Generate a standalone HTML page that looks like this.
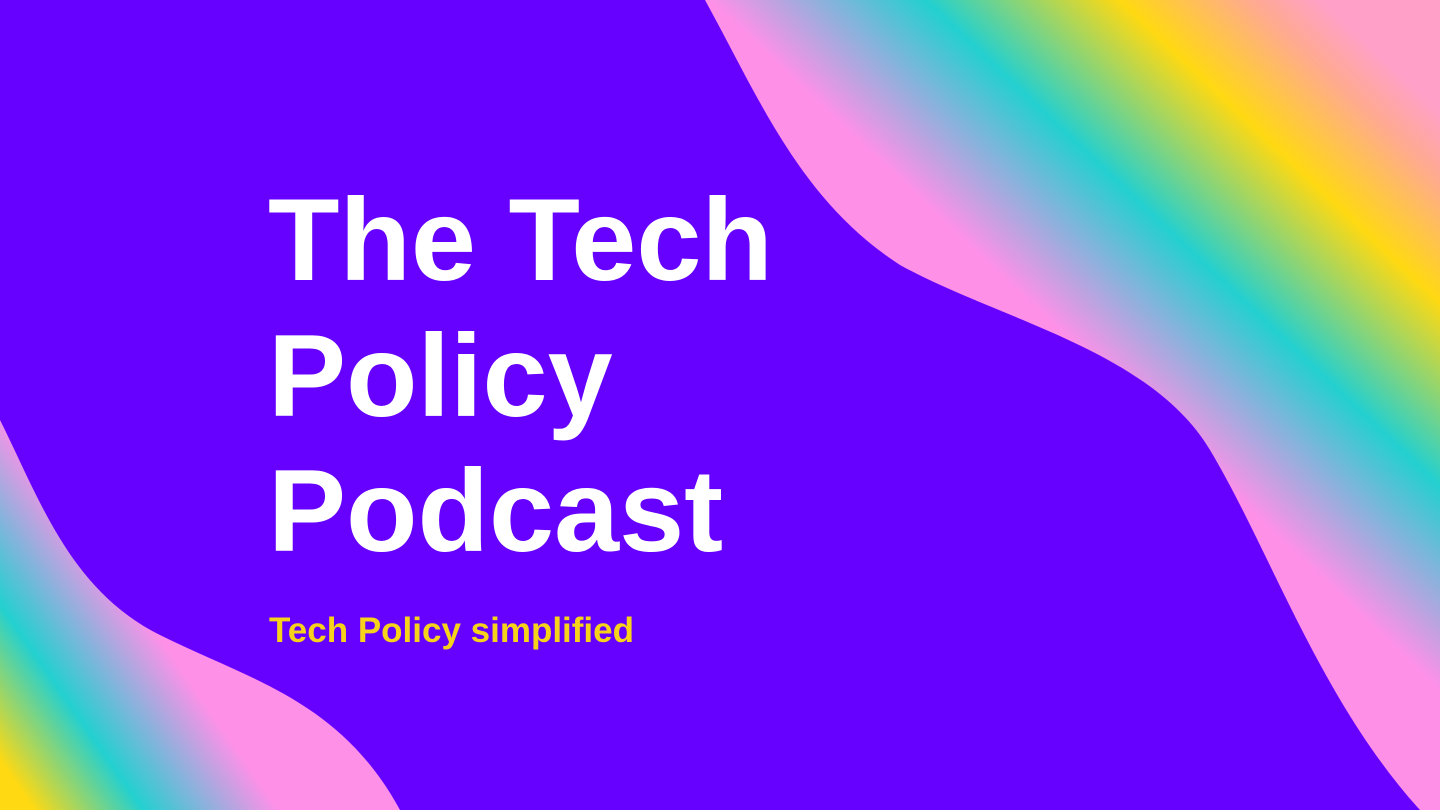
<!DOCTYPE html>
<html><head><meta charset="utf-8"><style>
html,body{margin:0;padding:0;}
body{width:1440px;height:810px;overflow:hidden;background:#6600ff;position:relative;font-family:"Liberation Sans",Arial,sans-serif;}
svg{position:absolute;left:0;top:0;}
.t{position:absolute;left:268px;color:#fff;font-weight:bold;font-size:117px;line-height:1;margin:0;}
.s{position:absolute;left:269px;top:611px;color:#f7d21a;font-weight:bold;font-size:35px;}
</style></head><body>
<svg width="1440" height="810" viewBox="0 0 1440 810">
<defs>
<linearGradient id="g1" gradientUnits="userSpaceOnUse" x1="950" y1="330" x2="1290" y2="-30">
<stop offset="0" stop-color="#ff90e8"/>
<stop offset="0.15" stop-color="#ff90e8"/>
<stop offset="0.45" stop-color="#23d0d0"/>
<stop offset="0.72" stop-color="#ffd912"/>
<stop offset="0.9" stop-color="#ffaa90"/>
<stop offset="1" stop-color="#ffa0c8"/>
</linearGradient>
<linearGradient id="g2" gradientUnits="userSpaceOnUse" x1="230" y1="640" x2="0" y2="800">
<stop offset="0" stop-color="#ff90e8"/>
<stop offset="0.2" stop-color="#ff90e8"/>
<stop offset="0.6" stop-color="#23d0d0"/>
<stop offset="0.92" stop-color="#ffd912"/>
<stop offset="1" stop-color="#ffd912"/>
</linearGradient>
</defs>
<path d="M705 0 C760 100 800 200 900 265 C1000 320 1150 350 1210 450 C1270 550 1320 700 1420 810 L1440 810 L1440 0 Z" fill="url(#g1)"/>
<path d="M0 420 C40 500 70 590 160 635 C250 680 340 700 400 810 L0 810 Z" fill="url(#g2)"/>
</svg>
<div class="t" style="top:181px">The Tech</div>
<div class="t" style="top:317px">Policy</div>
<div class="t" style="top:452px">Podcast</div>
<div class="s">Tech Policy simplified</div>
</body></html>
